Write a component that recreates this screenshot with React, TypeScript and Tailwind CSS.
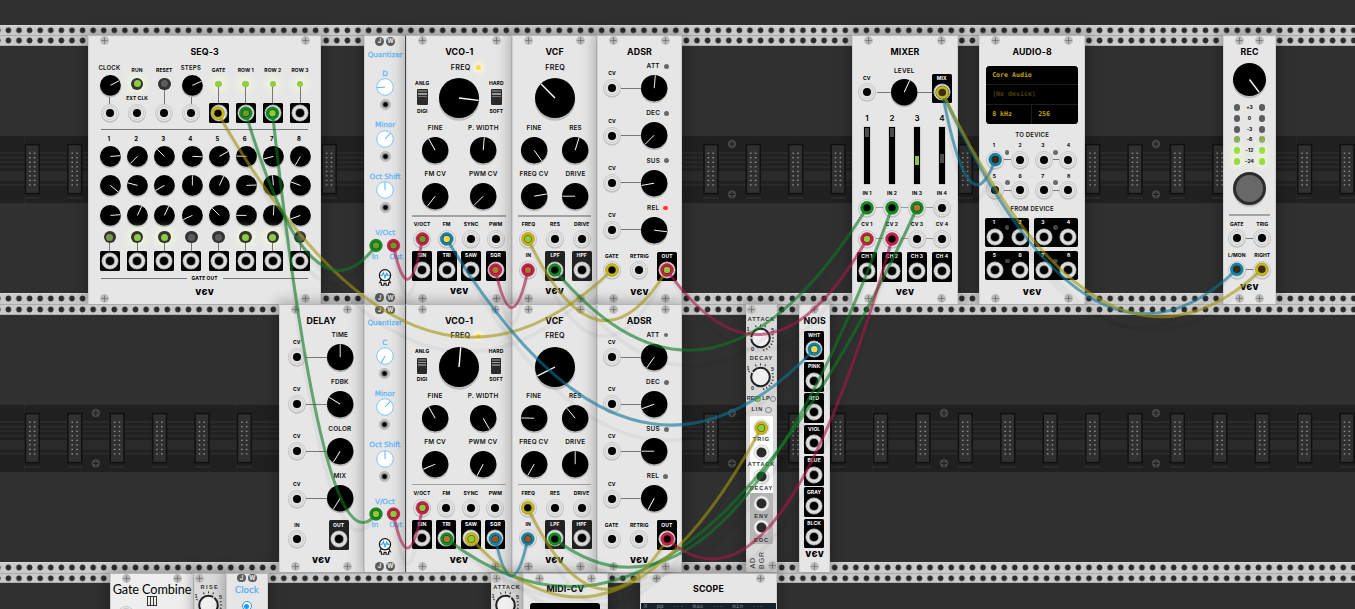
import React from "react";

type Kids = { children?: React.ReactNode; className?: string };

const Slot = ({ children, className = "" }: Kids) => (
  <div className={`flex shrink-0 items-center justify-center ${className}`}>{children}</div>
);

const Title = ({ children }: Kids) => (
  <span className="shrink-0 whitespace-nowrap text-[8.8px] font-bold leading-none tracking-[0.15px] text-black">{children}</span>
);
const Mid = ({ children, className = "" }: Kids) => (
  <span className={`shrink-0 whitespace-nowrap text-[6.4px] font-semibold leading-none tracking-[0.2px] text-[#111] ${className}`}>{children}</span>
);
const Tiny = ({ children, className = "text-black" }: Kids) => (
  <span className={`shrink-0 whitespace-nowrap text-[5px] font-bold leading-none tracking-[0.1px] ${className}`}>{children}</span>
);

const Screw = () => (
  <svg className="size-[9px] shrink-0" viewBox="0 0 9 9">
    <circle cx="4.5" cy="4.5" r="4.4" fill="#bbb" />
    <path d="M4.5 1.4V7.6M1.4 4.5H7.6" stroke="#7c7c7c" strokeWidth="1.1" />
  </svg>
);

const Knob = ({ r, a }: { r: number; a: number }) => (
  <svg className="shrink-0 overflow-visible" width={r * 2} height={r * 2} viewBox={`${-r} ${-r} ${r * 2} ${r * 2}`}>
    <circle cy={r * 0.12} r={r + 0.3} fill="#bcbcbc" />
    <circle r={r} fill="#000" />
    <line y1="0" y2={-r + 0.3} stroke="#fff" strokeWidth={r > 15 ? 1.4 : 0.9} transform={`rotate(${a})`} />
  </svg>
);

const Jack = ({ out = false }: { out?: boolean }) => (
  <svg className="size-[18px] shrink-0 overflow-visible" viewBox="-9 -9 18 18">
    {!out && <circle cy="1.2" r="8.6" fill="#c4c4c4" />}
    <circle r={out ? 8.1 : 8.5} fill={out ? "#e4e4e4" : "#e9e9e9"} stroke="#b8b8b8" strokeWidth=".7" />
    <circle r="6.5" fill="none" stroke={out ? "#cfcfcf" : "#b9b9b9"} strokeWidth=".7" />
    <circle r="5" fill={out ? "#8e8e8e" : "#dadada"} />
    <circle r="4" fill="#000" />
  </svg>
);

const MiniJack = () => (
  <svg className="size-[11px] shrink-0" viewBox="-5.5 -5.5 11 11">
    <circle r="5.1" fill="#c2c2c2" stroke="#a2a2a2" strokeWidth=".6" />
    <circle r="3.3" fill="#777" />
    <circle r="2.2" fill="#000" />
  </svg>
);

const Led = ({ on = false, tone = "green" }: { on?: boolean; tone?: "green" | "yellow" | "red" }) => {
  const c = !on
    ? "bg-[#686868]"
    : tone === "green"
      ? "bg-[#93cb45] shadow-[0_0_8px_5px_rgba(243,255,215,0.6)]"
      : tone === "yellow"
        ? "bg-[#fbd64f] shadow-[0_0_5px_3px_rgba(255,248,210,0.9)]"
        : "bg-[#fc342b] shadow-[0_0_5px_3px_rgba(255,220,220,0.8)]";
  return <div className={`shrink-0 rounded-full ${on && tone === "green" ? "size-[6.6px]" : "size-[4.8px]"} ${c}`} />;
};

const Button = ({ s }: { s: "on" | "dim" | "off" }) => (
  <div
    className={`flex size-[12.6px] shrink-0 items-center justify-center rounded-full bg-[#333] ${s === "on" ? "shadow-[0_0_8px_3px_rgba(243,255,215,0.8)]" : ""}`}
  >
    <div className={`size-[7px] rounded-full ${s === "on" ? "bg-[#8fcb40]" : s === "dim" ? "bg-[#77974b]" : "bg-[#5c5c5c]"}`} />
  </div>
);

const Out = ({ label, soft = false }: { label: string; soft?: boolean }) => (
  <div className={`flex h-[29.5px] w-[20px] shrink-0 flex-col items-center rounded-[1.5px] ${soft ? "bg-[#222]" : "bg-black"}`}>
    <Slot className="h-[9.5px]">
      <Tiny className="text-white">{label}</Tiny>
    </Slot>
    <Jack out />
  </div>
);
const In = ({ label }: { label: string }) => (
  <div className="flex h-[29.5px] shrink-0 flex-col items-center">
    <Slot className="h-[9.5px]">
      <Tiny>{label}</Tiny>
    </Slot>
    <Jack />
  </div>
);

const Logo = ({ className = "h-[22px]" }: { className?: string }) => (
  <Slot className={`-mb-[12px] ${className}`}>
    <span className="text-[7.6px] font-black leading-none tracking-[0.3px] text-black">VЄV</span>
  </Slot>
);

const Screws = ({ single = false }: { single?: boolean }) => (
  <div className={`flex h-[9px] shrink-0 items-center ${single ? "justify-center" : "justify-between px-[10.7px]"}`}>
    <Screw />
    {!single && <Screw />}
  </div>
);

const Panel = ({ children, className = "" }: Kids) => (
  <section
    className={`flex h-[268.2px] shrink-0 flex-col overflow-hidden border-x border-x-[#cfcfcf] border-t border-t-[#b5b5b5] bg-[#e6e6e6] shadow-[0_0_12px_3px_rgba(0,0,0,0.25)] ${className}`}
  >
    {children}
  </section>
);

/* Panel with the maker's title on top; the bottom screws sit just under the logo. */
const Vcv = ({ title, children, className = "", single = false, logo = "h-[22px]" }: Kids & { title: string; single?: boolean; logo?: string }) => (
  <Panel className={className}>
    <Screws single={single} />
    <Slot className="h-[16px] pb-[1.6px]">
      <Title>{title}</Title>
    </Slot>
    {children}
    <Logo className={logo} />
    <div className="mb-px mt-auto">
      <Screws single={single} />
    </div>
  </Panel>
);

const VWire = ({ className }: { className: string }) => <div className={`w-px shrink-0 bg-[#777] ${className}`} />;

const seqKnobs = [
  [86, 225, 315, 92, 60, 272, 255, 210],
  [130, 285, 240, 0, 25, 88, -5, 290],
  [86, 25, 25, 245, 315, 270, 3, 250],
];
const seqGates: ("on" | "dim" | "off")[] = ["dim", "on", "on", "off", "off", "on", "on", "off"];

const JackBox = () => (
  <div className="flex size-[20px] shrink-0 items-center justify-center rounded-[1.5px] bg-black">
    <Jack out />
  </div>
);

const Seq3 = () => (
  <Vcv title="SEQ-3" className="ml-[88px] w-[233.3px]">
    <div className="ml-[7.4px] grid h-[67.8px] w-[217.2px] shrink-0 grid-cols-8">
      {["CLOCK", "RUN", "RESET", "STEPS", "GATE", "ROW 1", "ROW 2", "ROW 3"].map((l, i) => (
        <div key={l} className="flex flex-col items-center">
          {i === 0 || i === 3 ? (
            <>
              <Slot className="h-[12.4px] pr-px">
                <Mid className="!text-[6px]">{l}</Mid>
              </Slot>
              <Slot className="h-[23px] pl-px">
                <Knob r={10.4} a={i ? 65 : 62} />
              </Slot>
              <VWire className="h-[7.6px]" />
              <Jack />
            </>
          ) : i < 3 ? (
            <>
              <Slot className="h-[19px]">
                <Tiny>{l}</Tiny>
              </Slot>
              <Slot className="h-[7px]">
                <Button s={i === 1 ? "on" : "off"} />
              </Slot>
              {i === 1 ? (
                <Slot className="h-[17px] pt-[6px]">
                  <Tiny>EXT CLK</Tiny>
                </Slot>
              ) : (
                <VWire className="mt-[3px] h-[14px]" />
              )}
              <Jack />
            </>
          ) : (
            <>
              <Slot className="h-[19px]">
                <Tiny>{l}</Tiny>
              </Slot>
              <Slot className="h-[7px]">
                <Led on />
              </Slot>
              <VWire className="h-[15.5px]" />
              <JackBox />
            </>
          )}
        </div>
      ))}
    </div>
    <div className="mx-[12px] h-px shrink-0 bg-[#777]" />
    <div className="ml-[7.4px] grid h-[144px] w-[217.2px] shrink-0 grid-cols-8">
      {seqGates.map((s, i) => (
        <div key={i} className="flex flex-col items-center">
          <Slot className="h-[18px] pr-[2px]">
            <Tiny className="!text-[6px] text-black">{i + 1}</Tiny>
          </Slot>
          <Slot className="h-[16.4px] pl-px">
            <Knob r={10.4} a={seqKnobs[0][i]} />
          </Slot>
          <Slot className="h-[41.5px] pl-px">
            <Knob r={10.4} a={seqKnobs[1][i]} />
          </Slot>
          <Slot className="h-[18px] pl-px">
            <Knob r={10.4} a={seqKnobs[2][i]} />
          </Slot>
          <Slot className="h-[26px]">
            <Button s={s} />
          </Slot>
          <VWire className="-mt-[7px] h-[7.6px]" />
          <JackBox />
        </div>
      ))}
    </div>
    <div className="mx-[12px] flex h-[8px] shrink-0 items-center gap-[5px]">
      <div className="h-px grow bg-[#777]" />
      <Tiny>GATE OUT</Tiny>
      <div className="h-px grow bg-[#777]" />
    </div>
  </Vcv>
);

const Badges = ({ className }: { className: string }) => (
  <Slot className={`gap-[2.4px] ${className}`}>
    {["J", "W"].map((c) => (
      <span key={c} className="flex size-[8.6px] shrink-0 items-center justify-center rounded-full bg-[#5b5b5b] text-[6px] font-bold leading-none text-[#eee]">
        {c}
      </span>
    ))}
  </Slot>
);

const Blue = ({ children, className = "" }: Kids) => (
  <span className={`shrink-0 whitespace-nowrap font-['DejaVu_Sans'] text-[7.2px] leading-none text-[#5db4f7] [-webkit-text-stroke:0.25px_#5db4f7] ${className}`}>{children}</span>
);

const Quantizer = ({ note, a, className = "" }: { note: string; a: number; className?: string }) => (
  <Panel className={`w-[42.4px] !border-r-[#555] ${className}`}>
    <Badges className="h-[9.6px]" />
    <Slot className="h-[14.8px] pt-[1.4px]">
      <Blue className="!text-[7.1px]">Quantizer</Blue>
    </Slot>
    {[
      [note, a],
      ["Minor", 42],
      ["Oct Shift", 0],
    ].map(([l, d]) => (
      <div key={l} className="flex flex-col items-center pt-[8.7px]">
        <Slot className="h-[8.2px]">
          <Blue>{l}</Blue>
        </Slot>
        <Slot className="h-[19.2px]">
          <svg className="size-[18px] shrink-0" viewBox="-9 -9 18 18">
            <circle r="8.3" fill="#fff" stroke="#7fc4f8" strokeWidth="1" />
            <line y2="-8" stroke="#5db4f7" strokeWidth="1" transform={`rotate(${d})`} />
          </svg>
        </Slot>
        <Slot className="h-[15.4px]">
          <MiniJack />
        </Slot>
      </div>
    ))}
    <Slot className="mt-[13.6px] h-[8.2px]">
      <Blue>V/Oct</Blue>
    </Slot>
    <Slot className="h-[17.4px]" />
    <Slot className="h-[4.2px] gap-[11px]">
      <Blue>In</Blue>
      <Blue className="-mr-[4px]">Out</Blue>
    </Slot>
    <Slot className="h-[37px] pt-px">
      <svg className="h-[17px] w-[14px]" viewBox="0 0 14 17">
        <path d="M3 11H11L12.4 13.8H10.6V16.2H8V14.4H6V16.2H3.4V13.8H1.6Z" fill="#fff" stroke="#111" strokeWidth="1.1" />
        <circle cx="7" cy="6.3" r="5.6" fill="#fff" stroke="#111" strokeWidth="1.2" />
        <path d="M2.2 6.3H4L5.5 3.5 7 8.6 8.8 4.2 9.8 6.3H11.8" fill="none" stroke="#38a4f5" strokeWidth="1.2" />
      </svg>
    </Slot>
    <Badges className="h-[4.2px]" />
  </Panel>
);

const Toggle = ({ top, bottom }: { top: string; bottom: string }) => (
  <div className="flex w-[24px] flex-col items-center pb-[1.4px]">
    <Tiny>{top}</Tiny>
    <div className="my-[3.7px] flex h-[15.5px] w-[10.5px] flex-col gap-[1px] rounded-[1px] bg-[#2b2b2b] p-[1px]">
      <div className="h-[1.6px] bg-[#666]" />
      <div className="h-[1.6px] bg-[#999]" />
      <div className="h-[1.6px] bg-[#777]" />
    </div>
    <Tiny>{bottom}</Tiny>
  </div>
);

const KnobPair = ({ labels, angles, className, labelH, knobH }: { labels: string[]; angles: number[]; className: string; labelH: string; knobH: string }) => (
  <div className={`grid shrink-0 grid-cols-2 ${className}`}>
    {labels.map((l, i) => (
      <div key={l} className="flex flex-col items-center">
        <Slot className={labelH}>
          <Mid>{l}</Mid>
        </Slot>
        <Slot className={knobH}>
          <Knob r={13.2} a={angles[i]} />
        </Slot>
      </div>
    ))}
  </div>
);

const Rule = () => (
  <Slot className="h-[11px] px-[5px]">
    <div className="h-[1.4px] w-full bg-[#a2a2a2]" />
  </Slot>
);

const Vco = ({ a }: { a: number[] }) => (
  <Vcv title="VCO-1" className="w-[106px]">
    <Slot className="h-[12px] gap-[5.5px] pl-[13px]">
      <Mid className="!text-[7.2px]">FREQ</Mid>
      <Led on tone="yellow" />
    </Slot>
    <div className="flex h-[49px] shrink-0 items-center justify-between px-[3px]">
      <Toggle top="ANLG" bottom="DIGI" />
      <Knob r={20} a={a[0]} />
      <Toggle top="HARD" bottom="SOFT" />
    </div>
    <KnobPair labels={["FINE", "P. WIDTH"]} angles={[a[1], a[2]]} className="ml-[4px] w-[96px]" labelH="h-[11px]" knobH="h-[33px]" />
    <KnobPair labels={["FM CV", "PWM CV"]} angles={[a[3], a[4]]} className="ml-[4px] w-[96px]" labelH="h-[15px]" knobH="h-[29px]" />
    <Rule />
    <div className="ml-[2.6px] grid h-[59.5px] w-[98px] shrink-0 grid-cols-4 justify-items-center">
      {["V/OCT", "FM", "SYNC", "PWM"].map((l, i) => (
        <div key={l} className="flex flex-col items-center">
          <Slot className="h-[6px]">
            <Tiny>{l}</Tiny>
          </Slot>
          <Slot className="h-[23.8px]">
            <Jack />
          </Slot>
          <Out label={["SIN", "TRI", "SAW", "SQR"][i]} />
        </div>
      ))}
    </div>
  </Vcv>
);

const Vcf = ({ a }: { a: number[] }) => (
  <Vcv title="VCF" className="w-[84.8px]">
    <Slot className="h-[12px] pl-px">
      <Mid className="!text-[7.2px]">FREQ</Mid>
    </Slot>
    <Slot className="h-[49px] pl-[1.6px]">
      <Knob r={20} a={a[0]} />
    </Slot>
    <KnobPair labels={["FINE", "RES"]} angles={[a[1], a[2]]} className="w-[83px]" labelH="h-[11px]" knobH="h-[33px]" />
    <KnobPair labels={["FREQ CV", "DRIVE"]} angles={[a[3], a[4]]} className="w-[83px]" labelH="h-[15px]" knobH="h-[29px]" />
    <Rule />
    <div className="ml-[1.8px] grid h-[59.5px] w-[80px] shrink-0 grid-cols-3 justify-items-center">
      {["FREQ", "RES", "DRIVE"].map((l, i) => (
        <div key={l} className="flex flex-col items-center">
          <Slot className="h-[6px]">
            <Tiny>{l}</Tiny>
          </Slot>
          <Slot className="h-[23.8px]">
            <Jack />
          </Slot>
          {i === 0 ? <In label="IN" /> : <Out soft label={i === 1 ? "LPF" : "HPF"} />}
        </div>
      ))}
    </div>
  </Vcv>
);

const CvRow = ({ label, a, led, leds = true }: { label: string; a: number; led?: boolean; leds?: boolean }) => (
  <div className="flex h-[47.2px] shrink-0">
    <div className={`flex flex-col items-center ${leds ? "w-[28px]" : "w-[34px]"}`}>
      <Slot className="h-[25px]">
        <Tiny>CV</Tiny>
      </Slot>
      <Slot className="h-[4px]">
        <Jack />
      </Slot>
    </div>
    <div className={`mt-[26.5px] h-px bg-[#777] ${leds ? "-ml-[5px] w-[20px]" : "-ml-[8px] w-[21px]"}`} />
    <div className="flex w-[26px] flex-col items-center">
      <Slot className={`h-[10px] gap-[4px] ${leds ? "pl-[7px]" : ""}`}>
        <Mid>{label}</Mid>
        {leds && <Led on={led} tone="red" />}
      </Slot>
      <Slot className="h-[34px]">
        <Knob r={13.2} a={a} />
      </Slot>
    </div>
  </div>
);

const Adsr = ({ a, lit }: { a: number[]; lit?: boolean }) => (
  <Vcv title="ADSR" className="w-[84.8px]">
    {["ATT", "DEC", "SUS", "REL"].map((l, i) => (
      <CvRow key={l} label={l} a={a[i]} led={lit && i === 3} />
    ))}
    <div className="grid h-[31.2px] w-[82.8px] shrink-0 grid-cols-3 justify-items-center pt-[1.6px]">
      <In label="GATE" />
      <In label="RETRIG" />
      <Out label="OUT" />
    </div>
  </Vcv>
);

const Delay = () => (
  <Vcv title="DELAY" className="ml-[278.9px] w-[84.8px]">
    {[
      ["TIME", 0],
      ["FDBK", 302],
      ["COLOR", 212],
      ["MIX", 212],
    ].map(([l, a]) => (
      <CvRow key={l} label={l as string} a={a as number} leds={false} />
    ))}
    <div className="flex h-[31.2px] shrink-0 justify-between pl-[8px] pr-[14px] pt-[1.6px]">
      <In label="IN" />
      <Out label="OUT" soft />
    </div>
  </Vcv>
);

const JoinedJack = ({ last, className }: { last: boolean; className: string }) => (
  <div className={`flex w-full shrink-0 items-center ${className}`}>
    <div className="w-[3.5px] shrink-0" />
    <Jack />
    {!last && <div className="h-px w-[7px] shrink-0 bg-[#999]" />}
  </div>
);

const Mixer = () => (
  <Vcv title="MIXER" className="ml-[170.2px] w-[105.8px]">
    <div className="flex h-[50px] shrink-0 justify-center pr-[1.2px]">
      <div className="flex w-[20px] flex-col items-center pt-[13px]">
        <Slot className="h-[9px]">
          <Tiny>CV</Tiny>
        </Slot>
        <Jack />
      </div>
      <div className="mt-[30.5px] h-px w-[14px] bg-[#777]" />
      <div className="flex w-[27px] flex-col items-center pt-[4.5px]">
        <Slot className="h-[10px]">
          <Mid>LEVEL</Mid>
        </Slot>
        <Slot className="h-[33px]">
          <Knob r={13.2} a={25} />
        </Slot>
      </div>
      <div className="mt-[30.5px] h-px w-[14px] bg-[#777]" />
      <div className="pt-[12.5px]">
        <Out label="MIX" />
      </div>
    </div>
    <div className="ml-[1.4px] grid h-[170px] w-[100px] shrink-0 grid-cols-4 justify-items-center">
      {["mt-0 bg-[#4b4b4b]", "mt-0 bg-[#4b4b4b]", "mt-[28px] bg-[#8cc152]", "mt-[26px] bg-[#4b4b4b]"].map((handle, i) => (
        <div key={i} className="flex w-full flex-col items-center">
          <Slot className="h-[14px]">
            <span className="text-[8px] font-semibold leading-none">{i + 1}</span>
          </Slot>
          <Slot className="h-[60px]">
            <div className="h-[57px] w-[6px] bg-black px-[0.8px] pt-px shadow-[0_0_0_0.5px_#bbb]">
              <div className={`h-[9.5px] ${handle}`} />
            </div>
          </Slot>
          <Slot className="h-[16px]">
            <Tiny>IN {i + 1}</Tiny>
          </Slot>
          <JoinedJack last={i === 3} className="h-[12.4px]" />
          <Slot className="h-[22.2px]">
            <Tiny>CV {i + 1}</Tiny>
          </Slot>
          <JoinedJack last={i === 3} className="h-[5.8px]" />
          <div className="mt-[10.4px]">
            <Out label={`CH ${i + 1}`} />
          </div>
        </div>
      ))}
    </div>
  </Vcv>
);

const DevicePair = ({ n, out }: { n: number; out?: boolean }) => (
  <div className={`flex h-[29.3px] w-[44px] shrink-0 flex-col items-center ${out ? "rounded-[2px] bg-black" : ""}`}>
    <div className="flex h-[10px] w-[29px] shrink-0 items-center justify-between">
      <Tiny className={out ? "text-white" : "text-black"}>{n}</Tiny>
      <div className={`size-[4.6px] shrink-0 rounded-full ${out ? "mt-[10px] bg-[#454545]" : "mt-[13px] bg-[#6c6c6c]"}`} />
      <Tiny className={out ? "text-white" : "text-black"}>{n + 1}</Tiny>
    </div>
    <div className="flex items-center">
      <Jack out={out} />
      <div className={`h-px w-[6.5px] ${out ? "" : "bg-[#777]"}`} />
      <Jack out={out} />
    </div>
  </div>
);
const DeviceRow = ({ n, out, className = "" }: { n: number; out?: boolean; className?: string }) => (
  <div className={`flex shrink-0 justify-center gap-[4.5px] pr-[1.2px] ${className}`}>
    <DevicePair n={n} out={out} />
    <DevicePair n={n + 2} out={out} />
  </div>
);

const Audio = () => (
  <Vcv title="AUDIO-8" className="ml-[21.4px] w-[105.8px]">
    <div className="ml-[5.4px] mr-[6.4px] mt-[4.5px] flex h-[58.5px] shrink-0 flex-col overflow-hidden whitespace-pre rounded-[3.5px] bg-black font-['DejaVu_Sans_Mono'] text-[6.6px] font-bold leading-none text-[#c4a200]">
      <div className="flex h-[19.5px] items-center border-b border-[#1c1c1c] pl-[6.5px]">Core Audio</div>
      <div className="flex h-[19.5px] items-center border-b border-[#1c1c1c] pl-[6.5px] text-[#4c4003]">(No device)</div>
      <div className="grid h-[19.5px] grid-cols-2">
        <div className="flex items-center border-r border-[#1c1c1c] pl-[6.5px]">8 kHz</div>
        <div className="flex items-center pl-[6.5px]">256</div>
      </div>
    </div>
    <Slot className="h-[16px] pt-[5px]">
      <Mid className="!text-[6px]">TO DEVICE</Mid>
    </Slot>
    <DeviceRow n={1} className="h-[30.6px] pt-[0.5px]" />
    <DeviceRow n={5} className="h-[30.5px]" />
    <Slot className="h-[16px] pb-[1px]">
      <Mid className="!text-[6px]">FROM DEVICE</Mid>
    </Slot>
    <DeviceRow n={1} out className="h-[33.4px]" />
    <DeviceRow n={5} out className="h-[30.5px]" />
  </Vcv>
);

const Meter = ({ level }: { level: number }) => (
  <div
    className={`size-[6.8px] rounded-full ${level < 3 ? "bg-[#5c5c5c]" : level === 3 ? "bg-[#86a853]" : "bg-[#97dc40] shadow-[0_0_6px_4px_rgba(243,255,215,0.5)]"}`}
  />
);

const Rec = () => (
  <Vcv title="REC" className="ml-[138px] w-[53px]" logo="h-[11.4px]">
    <Slot className="h-[37px]">
      <Knob r={16.5} a={143} />
    </Slot>
    <Slot className="h-[4px]" />
    {["+3", "0", "-3", "-6", "-12", "-24"].map((l, i) => (
      <div key={l} className="flex h-[10.7px] shrink-0 items-center justify-center">
        <Meter level={i} />
        <Slot className="w-[18.3px]">
          <Tiny>{l}</Tiny>
        </Slot>
        <Meter level={i} />
      </div>
    ))}
    <Slot className="h-[44px]">
      <div className="size-[33.4px] rounded-full border-[3px] border-[#2c2c2c] bg-[#686868] shadow-[0_2px_0_0_#c4c4c4]" />
    </Slot>
    <Slot className="h-[8.9px] px-[5px]">
      <div className="h-[1.2px] w-full bg-[#a2a2a2]" />
    </Slot>
    {[
      ["GATE", "TRIG"],
      ["L/MON", "RIGHT"],
    ].map((p) => (
      <div key={p[0]} className="flex h-[31.2px] shrink-0 flex-col">
        <div className="flex h-[10px] shrink-0">
          {p.map((l) => (
            <Slot key={l} className="w-1/2">
              <Tiny>{l}</Tiny>
            </Slot>
          ))}
        </div>
        <div className="flex items-center justify-center">
          <Jack />
          <div className="h-px w-[7px] bg-[#777]" />
          <Jack />
        </div>
      </div>
    ))}
  </Vcv>
);

const Caps = ({ children, className = "" }: Kids) => (
  <span className={`shrink-0 whitespace-nowrap font-['Liberation_Sans'] text-[5.6px] font-bold leading-none tracking-[0.9px] text-[#333] ${className}`}>{children}</span>
);

const TickKnob = ({ a, zero = true }: { a: number; zero?: boolean }) => (
  <svg className="h-[26px] w-[30px] shrink-0 overflow-visible" viewBox="-14.5 -13 30 26">
    {[-65, -22, 0, 22, 75, 90, 105, 120, 135, 150, 165].map((t) => (
      <line key={t} y1="-11.6" y2="-13.6" stroke="#333" strokeWidth="1" transform={`rotate(${t})`} />
    ))}
    <circle r="9.3" fill="#f0f0f0" stroke="#222" strokeWidth="2" />
    <line y1="-8" y2="-10.6" stroke="#eee" strokeWidth="1.4" transform={`rotate(${a})`} />
    <g fontSize="5.6" fontFamily="Liberation Sans" fontWeight="700" fill="#333">
      <text x="-14" y="-7">1</text>
      <text x="10.6" y="-6">5</text>
      {zero && <text x="-9.5" y="13">0</text>}
    </g>
  </svg>
);

const PlainJack = () => (
  <svg className="size-[17px] shrink-0" viewBox="-8.5 -8.5 17 17">
    <circle r="7.7" fill="#ededed" stroke="#c4c4c4" strokeWidth=".6" />
    <circle r="5" fill="#2b2b2b" />
  </svg>
);

const Ring = ({ on }: { on?: boolean }) => (
  <div className={`size-[6.4px] shrink-0 rounded-full border border-[#888] ${on ? "bg-[#7ed321]" : "bg-[#d5d5d5]"}`} />
);

const AdBgr = () => (
  <Panel className="ml-[64px] w-[31.6px] !bg-[#d9d9d9]">
    <div className="h-[9px] shrink-0">
      <Screw />
    </div>
    <Slot className="h-[11px]">
      <Caps>ATTACK</Caps>
    </Slot>
    <Slot className="h-[26px] pr-px">
      <TickKnob a={-90} />
    </Slot>
    <Slot className="h-[15px]">
      <Caps>DECAY</Caps>
    </Slot>
    <Slot className="h-[22.6px] pr-px">
      <TickKnob a={-60} />
    </Slot>
    <div className="mt-[5.4px] flex h-[10.5px] shrink-0 items-center justify-center">
      <Caps className="!tracking-[0.1px]">REP</Caps>
      <div className="-ml-[4px]">
        <Ring on />
      </div>
      <Caps className="ml-[1.5px] !tracking-[0.2px]">LP</Caps>
      <Ring />
    </div>
    <Slot className="h-[10.5px] gap-[2px]">
      <Caps>LIN</Caps>
      <Ring />
    </Slot>
    <div className="mx-[3px] mt-[1.2px] flex h-[76.5px] shrink-0 flex-col items-center rounded-t-[2px] bg-white pt-[3px]">
      {["TRIG", "ATTACK", "DECAY"].map((l) => (
        <div key={l} className="flex h-[24.7px] flex-col items-center">
          <PlainJack />
          <Caps className="mt-px">{l}</Caps>
        </div>
      ))}
    </div>
    <div className="mx-[3px] flex h-[51px] shrink-0 flex-col items-center rounded-b-[2px] bg-[#b5b5b5] pt-[2.6px]">
      {["ENV", "EOC"].map((l) => (
        <div key={l} className="flex h-[25px] flex-col items-center">
          <PlainJack />
          <Caps className="mt-[1.4px]">{l}</Caps>
        </div>
      ))}
    </div>
    <div className="flex h-[27px] shrink-0 items-end pb-[1px] pl-[2px]">
      <Caps className="mb-px rotate-180 !text-[7px] !font-normal [writing-mode:vertical-rl]">AD</Caps>
      <Caps className="mb-px ml-[2px] rotate-180 !text-[7px] !font-normal [writing-mode:vertical-rl]">BGR</Caps>
      <div className="ml-[3px]">
        <Screw />
      </div>
    </div>
  </Panel>
);

const Noise = () => (
  <Vcv title="NOIS" single className="ml-[21.6px] w-[31.6px]" logo="h-[12.4px]">
    {["WHT", "PINK", "RED", "VIOL", "BLUE", "GRAY", "BLCK"].map((l) => (
      <Slot key={l} className="h-[31.3px] pr-px">
        <Out label={l} />
      </Slot>
    ))}
  </Vcv>
);

const GateCombine = () => (
  <Panel className="ml-[110px] w-[84px] !bg-[#eeeeee]">
    <Screws />
    <Slot className="h-[12.5px]">
      <span className="whitespace-nowrap font-['Lato'] text-[12.7px] leading-none tracking-[-0.1px] text-black">Gate Combine</span>
    </Slot>
    <Slot className="h-[11px]">
      <div className="flex h-[10px] w-[10.5px] justify-evenly border border-[#333]">
        <div className="w-px bg-[#333]" />
        <div className="w-px bg-[#333]" />
      </div>
    </Slot>
    <div className="pl-[6px]">
      <Jack />
    </div>
  </Panel>
);

const Envelope = ({ label, className = "" }: { label: string; className?: string }) => (
  <Panel className={`w-[31.8px] !bg-[#dadada] ${className}`}>
    <div className="h-[9px] shrink-0">
      <Screw />
    </div>
    <Slot className="h-[10.4px]">
      <Caps className={label === "RISE" ? "!tracking-[1.4px]" : ""}>{label}</Caps>
    </Slot>
    <Slot className="h-[23.6px] pr-px">
      <TickKnob a={35} zero={false} />
    </Slot>
  </Panel>
);

const Clock = () => (
  <Panel className="w-[42.4px]">
    <Badges className="h-[8.4px]" />
    <Slot className="h-[15.6px] pt-px">
      <Blue className="!text-[8.8px] !text-[#4aacf8]">Clock</Blue>
    </Slot>
    <Slot className="h-[17px]">
      <div className="flex size-[10px] items-center justify-center rounded-full border border-[#1e9bff] bg-white">
        <div className="size-[5px] rounded-full bg-[#1e9bff]" />
      </div>
    </Slot>
  </Panel>
);

const TopOnly = ({ title, children, className }: Kids & { title: string }) => (
  <Panel className={className}>
    <Screws />
    <Slot className="h-[14px]">
      <Title>{title}</Title>
    </Slot>
    {children}
  </Panel>
);

const Rail = ({ bottom = false }: { bottom?: boolean }) => (
  <div
    className={`h-[10.6px] shrink-0 bg-[#cacaca] bg-[radial-gradient(circle,#2b2b2b_2.5px,transparent_3.2px)] bg-[length:10.603px_10.6px] bg-[position:3.1px_0] ${
      bottom ? "shadow-[inset_0_1px_0_#d8d8d8]" : "shadow-[inset_0_1px_0_#ababab,inset_0_-1px_0_#b0b0b0]"
    }`}
  />
);

const busBands: [number, number][] = [
  [16, 2.3],
  [20.6, 2.3],
  [25.2, 2.1],
  [29.6, 2.3],
  [35, 10],
  [47.6, 2.1],
];

const BusBoard = () => (
  <svg className="block h-[67px] w-[1355px] shrink-0" viewBox="0 0 1355 67">
    <rect width="1355" height="67" fill="#202020" />
    {busBands.map(([y, h]) => (
      <rect key={y} y={y} width="1355" height={h} fill="#2a2a2a" />
    ))}
    {Array.from({ length: 32 }, (_, i) => {
      const x = 25 + i * 42.41;
      return (
        <g key={i}>
          {i % 5 === 0 && <rect x={x - 0.8} width=".7" height="67" fill="#2b2b2b" />}
          <rect x={x - 0.4} y="7.6" width="15.4" height="51" fill="#1b1b1b" />
          <rect x={x + 0.5} y="8.7" width="13.7" height="48.8" fill="#303030" stroke="#101010" strokeWidth="1.3" />
          <rect x={x} y="61" width="15" height="1.8" fill="#2b2b2b" />
          {Array.from({ length: 16 }, (_, k) => (
            <rect key={k} x={x + 4 + (k % 2) * 4.8} y={16.6 + (k >> 1) * 4.53} width="1.6" height="1.2" fill="#999" />
          ))}
          {i % 5 === 1 &&
            [8, 58.4].map((y) => (
              <g key={y} transform={`translate(${x + 28.4} ${y})`}>
                <circle r="4.2" fill="#484848" />
                <path d="M-3 0H3M0 -3V3" stroke="#202020" strokeWidth="1.1" />
              </g>
            ))}
        </g>
      );
    })}
  </svg>
);

const RackRow = ({ children }: Kids) => (
  <div className="relative isolate h-[268.6px] shrink-0">
    <div className="absolute inset-0 -z-10 flex flex-col bg-[#303030]">
      <Rail />
      <div className="h-[90.4px] shrink-0" />
      <BusBoard />
      <div className="h-[90px] shrink-0" />
      <Rail bottom />
    </div>
    <div className="flex">{children}</div>
  </div>
);

const Y = "#c8b808";
const G = "#0e9020";
const R = "#d01c4a";
const B = "#0d86ad";
const wire: Record<string, string> = { [Y]: "#a3940a", [G]: "#0b7a22", [R]: "#aa1844", [B]: "#0b7397" };
const lime = "#8fc93a";
const olive = "#6f9a28";
const amber = "#b07433";
const rust = "#9b5326";
const brown = "#40290e";
const sun = "#fcd549";
const off = "#000";

type Cable = { c: string; a: [number, number]; b: [number, number]; sag: number; la: string; lb: string };
const cables: Cable[] = [
  { c: Y, a: [218, 113.2], b: [612, 270], sag: 460, la: off, lb: off },
  { c: G, a: [245.8, 113.2], b: [376, 245.5], sag: 333, la: olive, lb: olive },
  { c: G, a: [272.5, 113.2], b: [376, 514], sag: 582, la: lime, lb: lime },
  { c: R, a: [393.5, 245.5], b: [422.5, 239], sag: 316, la: olive, lb: olive },
  { c: B, a: [446.7, 239], b: [814.3, 349.2], sag: 544, la: sun, lb: sun },
  { c: R, a: [495.5, 270], b: [528, 270], sag: 345, la: amber, lb: amber },
  { c: Y, a: [528, 239], b: [667, 270], sag: 385, la: lime, lb: lime },
  { c: G, a: [554.8, 270], b: [867, 207.8], sag: 457, la: off, lb: off },
  { c: R, a: [667, 270], b: [867, 239], sag: 413, la: lime, lb: lime },
  { c: B, a: [942.3, 92.5], b: [995.3, 159.6], sag: 233, la: brown, lb: brown },
  { c: B, a: [942.3, 92.5], b: [1236.8, 269.3], sag: 413, la: brown, lb: brown },
  { c: Y, a: [942.3, 92.5], b: [1261.8, 269.3], sag: 420, la: brown, lb: brown },
  { c: R, a: [393.5, 514], b: [422.5, 507.8], sag: 585, la: lime, lb: lime },
  { c: G, a: [446.8, 539], b: [917, 207.8], sag: 721, la: amber, lb: amber },
  { c: G, a: [554.8, 539], b: [892, 207.8], sag: 668, la: off, lb: off },
  { c: Y, a: [471.4, 539], b: [761.3, 428], sag: 696, la: lime, lb: lime },
  { c: Y, a: [527.8, 507.8], b: [667.3, 539], sag: 653, la: off, lb: off },
  { c: B, a: [495.3, 539], b: [527.8, 539], sag: 613, la: rust, lb: rust },
  { c: R, a: [667.3, 539], b: [892, 239], sag: 639, la: off, lb: off },
];

const curve = (k: Cable, extra = 0) => `M${k.a[0]} ${k.a[1]}Q${(k.a[0] + k.b[0]) / 2} ${k.sag + extra} ${k.b[0]} ${k.b[1]}`;

const Plug = ({ p, c, led }: { p: [number, number]; c: string; led: string }) => (
  <g transform={`translate(${p[0]} ${p[1]})`}>
    <circle r="6.5" fill={c} stroke="#000" strokeOpacity=".3" strokeWidth=".5" />
    <circle r="3.8" fill="#111" fillOpacity=".75" />
    <circle r="3.3" fill={led} />
  </g>
);

const Cables = () => (
  <svg className="pointer-events-none absolute inset-0 h-[609px] w-[1355px]" viewBox="0 0 1355 609" fill="none">
    {cables.map((k, i) => (
      <path key={i} d={curve(k, 32)} stroke="#000" strokeOpacity=".04" strokeWidth="4" />
    ))}
    {cables.map((k, i) => (
      <path key={i} d={curve(k)} stroke={wire[k.c]} strokeOpacity=".6" strokeWidth="3" />
    ))}
    {cables.map((k, i) => (
      <g key={i}>
        <Plug p={k.a} c={k.c} led={k.la} />
        <Plug p={k.b} c={k.c} led={k.lb} />
      </g>
    ))}
  </svg>
);

export default function App() {
  return (
    <main className="relative flex h-[609px] w-[1355px] flex-col overflow-hidden bg-[#303030] font-['Inter',sans-serif]">
      <div className="-mt-[233.2px]" />
      <RackRow />
      <RackRow>
        <Seq3 />
        <Quantizer note="D" a={265} className="ml-[42.6px]" />
        <Vco a={[97, -30, 5, 218, 225]} />
        <Vcf a={[315, 145, 17, 80, 270]} />
        <Adsr a={[5, 225, 260, 97]} lit />
        <Mixer />
        <Audio />
        <Rec />
      </RackRow>
      <RackRow>
        <Delay />
        <Quantizer note="C" a={210} />
        <Vco a={[5, -30, 150, 247, 208]} />
        <Vcf a={[243, 271, -40, 210, 0]} />
        <Adsr a={[215, 250, 270, 208]} />
        <AdBgr />
        <Noise />
      </RackRow>
      <RackRow>
        <GateCombine />
        <Envelope label="RISE" />
        <Clock />
        <Envelope label="ATTACK" className="ml-[222.9px]" />
        <TopOnly title="MIDI-CV" className="w-[84.8px]">
          <div className="mx-[6.5px] mt-[6.5px] h-[40px] shrink-0 rounded-[3px] bg-black" />
        </TopOnly>
        <TopOnly title="SCOPE" className="ml-[32.2px] w-[137.2px]">
          <div className="-mx-px mt-[6px] flex h-[40px] shrink-0 gap-[9px] bg-[#16212a] pl-[4px] pt-[0.5px] font-['DejaVu_Sans_Mono'] text-[6px] leading-none text-[#7d858b]">
            <span>X</span>
            <span>pp</span>
            <span>---</span>
            <span>max</span>
            <span>---</span>
            <span>min</span>
            <span>---</span>
          </div>
        </TopOnly>
      </RackRow>
      <Cables />
    </main>
  );
}
